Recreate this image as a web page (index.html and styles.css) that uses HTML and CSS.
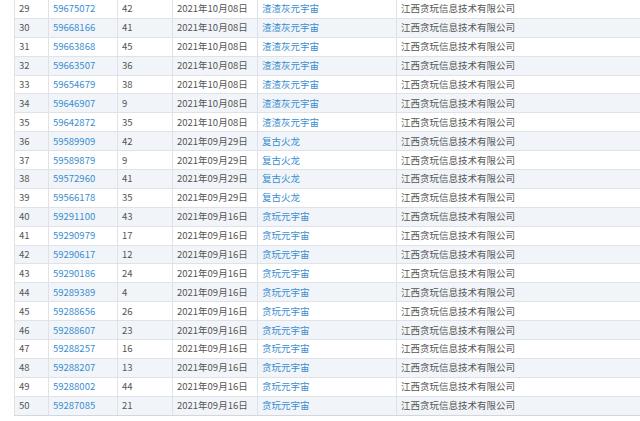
FILE: index.html
```html
<!DOCTYPE html>
<html lang="zh">
<head>
<meta charset="utf-8">
<link rel="stylesheet" href="styles.css">
</head>
<body>
<div class="wrap">
<table class="grid">
<colgroup><col class="c1"><col class="c2"><col class="c3"><col class="c4"><col class="c5"><col class="c6"></colgroup>
<tbody>
<tr><td>29</td><td><a>59675072</a></td><td>42</td><td>2021年10月08日</td><td><a>渣渣灰元宇宙</a></td><td>江西贪玩信息技术有限公司</td></tr>
<tr><td>30</td><td><a>59668166</a></td><td>41</td><td>2021年10月08日</td><td><a>渣渣灰元宇宙</a></td><td>江西贪玩信息技术有限公司</td></tr>
<tr><td>31</td><td><a>59663868</a></td><td>45</td><td>2021年10月08日</td><td><a>渣渣灰元宇宙</a></td><td>江西贪玩信息技术有限公司</td></tr>
<tr><td>32</td><td><a>59663507</a></td><td>36</td><td>2021年10月08日</td><td><a>渣渣灰元宇宙</a></td><td>江西贪玩信息技术有限公司</td></tr>
<tr><td>33</td><td><a>59654679</a></td><td>38</td><td>2021年10月08日</td><td><a>渣渣灰元宇宙</a></td><td>江西贪玩信息技术有限公司</td></tr>
<tr><td>34</td><td><a>59646907</a></td><td>9</td><td>2021年10月08日</td><td><a>渣渣灰元宇宙</a></td><td>江西贪玩信息技术有限公司</td></tr>
<tr><td>35</td><td><a>59642872</a></td><td>35</td><td>2021年10月08日</td><td><a>渣渣灰元宇宙</a></td><td>江西贪玩信息技术有限公司</td></tr>
<tr><td>36</td><td><a>59589909</a></td><td>42</td><td>2021年09月29日</td><td><a>复古火龙</a></td><td>江西贪玩信息技术有限公司</td></tr>
<tr><td>37</td><td><a>59589879</a></td><td>9</td><td>2021年09月29日</td><td><a>复古火龙</a></td><td>江西贪玩信息技术有限公司</td></tr>
<tr><td>38</td><td><a>59572960</a></td><td>41</td><td>2021年09月29日</td><td><a>复古火龙</a></td><td>江西贪玩信息技术有限公司</td></tr>
<tr><td>39</td><td><a>59566178</a></td><td>35</td><td>2021年09月29日</td><td><a>复古火龙</a></td><td>江西贪玩信息技术有限公司</td></tr>
<tr><td>40</td><td><a>59291100</a></td><td>43</td><td>2021年09月16日</td><td><a>贪玩元宇宙</a></td><td>江西贪玩信息技术有限公司</td></tr>
<tr><td>41</td><td><a>59290979</a></td><td>17</td><td>2021年09月16日</td><td><a>贪玩元宇宙</a></td><td>江西贪玩信息技术有限公司</td></tr>
<tr><td>42</td><td><a>59290617</a></td><td>12</td><td>2021年09月16日</td><td><a>贪玩元宇宙</a></td><td>江西贪玩信息技术有限公司</td></tr>
<tr><td>43</td><td><a>59290186</a></td><td>24</td><td>2021年09月16日</td><td><a>贪玩元宇宙</a></td><td>江西贪玩信息技术有限公司</td></tr>
<tr><td>44</td><td><a>59289389</a></td><td>4</td><td>2021年09月16日</td><td><a>贪玩元宇宙</a></td><td>江西贪玩信息技术有限公司</td></tr>
<tr><td>45</td><td><a>59288656</a></td><td>26</td><td>2021年09月16日</td><td><a>贪玩元宇宙</a></td><td>江西贪玩信息技术有限公司</td></tr>
<tr><td>46</td><td><a>59288607</a></td><td>23</td><td>2021年09月16日</td><td><a>贪玩元宇宙</a></td><td>江西贪玩信息技术有限公司</td></tr>
<tr><td>47</td><td><a>59288257</a></td><td>16</td><td>2021年09月16日</td><td><a>贪玩元宇宙</a></td><td>江西贪玩信息技术有限公司</td></tr>
<tr><td>48</td><td><a>59288207</a></td><td>13</td><td>2021年09月16日</td><td><a>贪玩元宇宙</a></td><td>江西贪玩信息技术有限公司</td></tr>
<tr><td>49</td><td><a>59288002</a></td><td>44</td><td>2021年09月16日</td><td><a>贪玩元宇宙</a></td><td>江西贪玩信息技术有限公司</td></tr>
<tr><td>50</td><td><a>59287085</a></td><td>21</td><td>2021年09月16日</td><td><a>贪玩元宇宙</a></td><td>江西贪玩信息技术有限公司</td></tr>
</tbody>
</table>
</div>
</body>
</html>
```
FILE: styles.css
```css
html, body {
  margin: 0;
  padding: 0;
  background: #fff;
}
.wrap {
  margin: -1px 0 0 14px;
  width: 626px;
}
.grid {
  border-collapse: collapse;
  table-layout: fixed;
  width: 626px;
  font-family: "Noto Sans CJK SC", "Noto Sans", sans-serif;
  font-size: 9.5px;
  color: #555;
}
.c1 { width: 34px; }
.c2 { width: 69px; }
.c3 { width: 55px; }
.c4 { width: 85px; }
.c5 { width: 139px; }
.c6 { width: 244px; }
.grid td {
  height: 17.9px;
  padding: 0 4px;
  border: 1px solid #dfe3e8;
  border-right: 0;
  white-space: nowrap;
  overflow: hidden;
  vertical-align: middle;
  line-height: 17px;
}
.grid td + td {
  border-left: 1px solid #dfe3e8;
}
.grid tr:nth-child(even) td {
  background: #f1f5f9;
}
.grid tr:last-child td {
  border-bottom-color: #d3d6da;
}
.grid a {
  color: #3b8dd0;
  text-decoration: none;
}
```
